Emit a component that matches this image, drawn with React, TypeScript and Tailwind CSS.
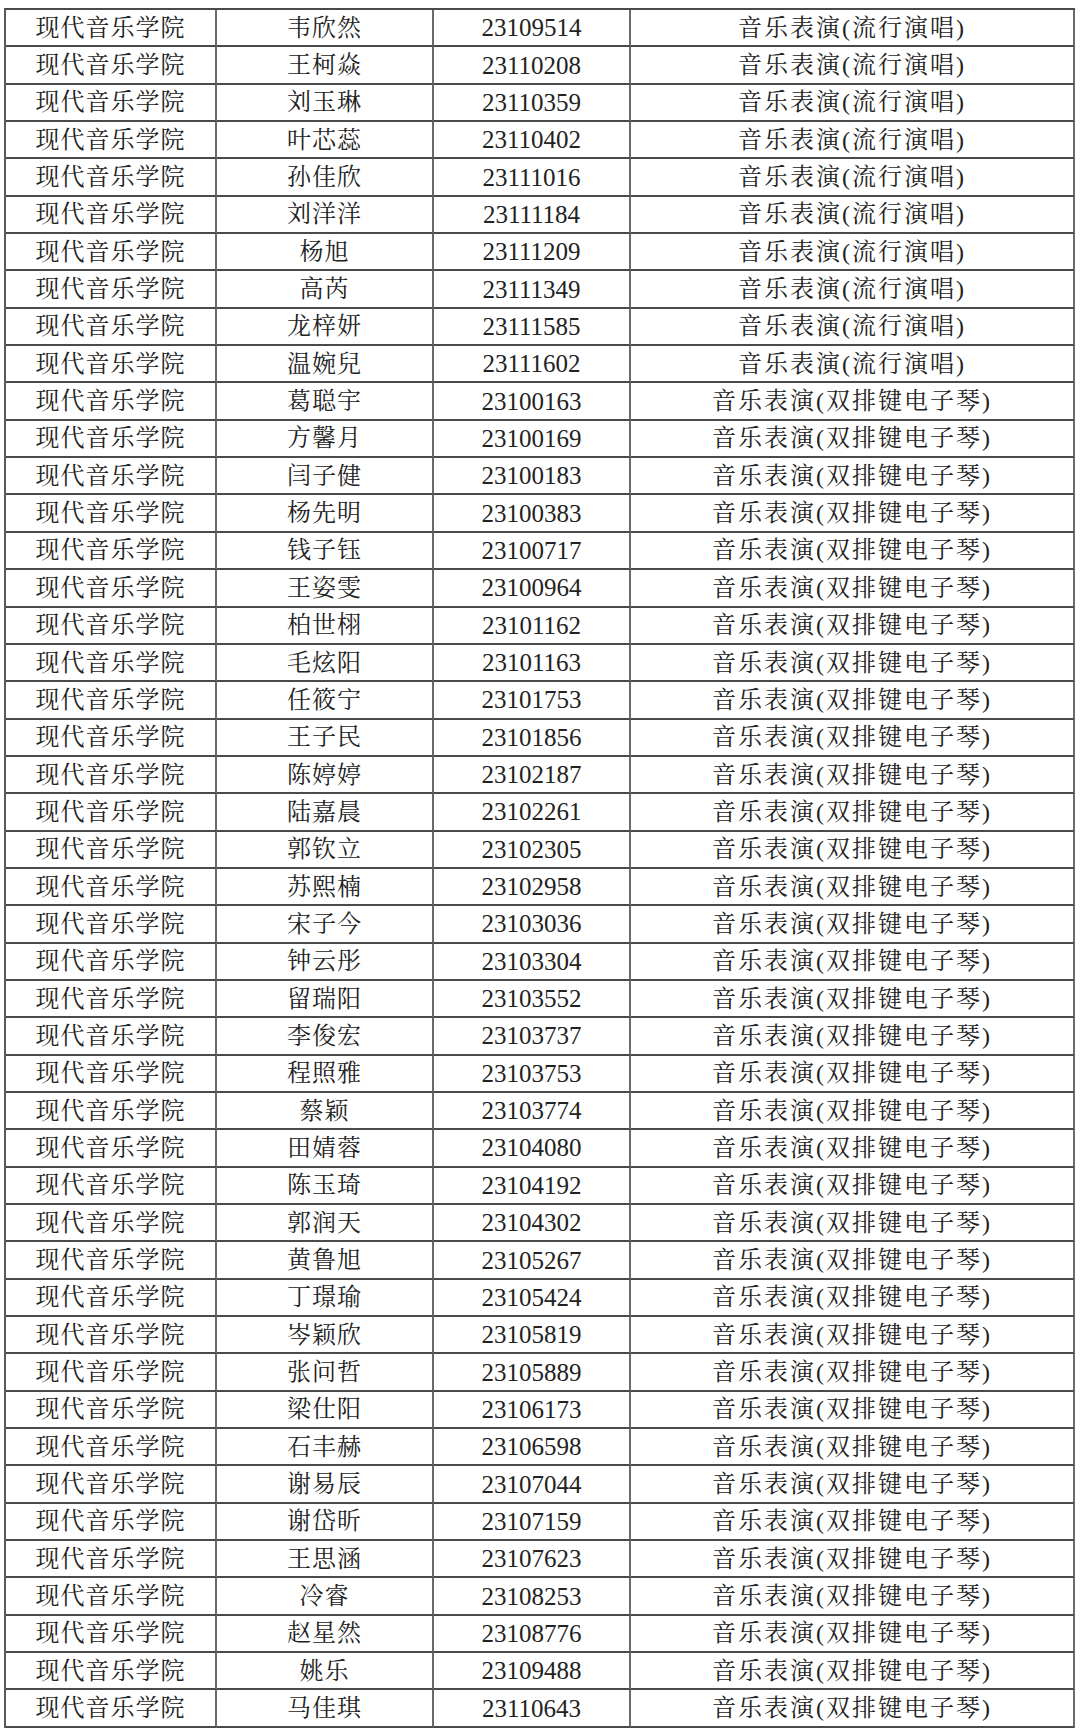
const POP = "音乐表演(流行演唱)";
const KEY = "音乐表演(双排键电子琴)";

const rows: [string, string, string][] = [
  ["韦欣然", "23109514", POP],
  ["王柯焱", "23110208", POP],
  ["刘玉琳", "23110359", POP],
  ["叶芯蕊", "23110402", POP],
  ["孙佳欣", "23111016", POP],
  ["刘洋洋", "23111184", POP],
  ["杨旭", "23111209", POP],
  ["高芮", "23111349", POP],
  ["龙梓妍", "23111585", POP],
  ["温婉兒", "23111602", POP],
  ["葛聪宇", "23100163", KEY],
  ["方馨月", "23100169", KEY],
  ["闫子健", "23100183", KEY],
  ["杨先明", "23100383", KEY],
  ["钱子钰", "23100717", KEY],
  ["王姿雯", "23100964", KEY],
  ["柏世栩", "23101162", KEY],
  ["毛炫阳", "23101163", KEY],
  ["任筱宁", "23101753", KEY],
  ["王子民", "23101856", KEY],
  ["陈婷婷", "23102187", KEY],
  ["陆嘉晨", "23102261", KEY],
  ["郭钦立", "23102305", KEY],
  ["苏熙楠", "23102958", KEY],
  ["宋子今", "23103036", KEY],
  ["钟云彤", "23103304", KEY],
  ["留瑞阳", "23103552", KEY],
  ["李俊宏", "23103737", KEY],
  ["程照雅", "23103753", KEY],
  ["蔡颖", "23103774", KEY],
  ["田婧蓉", "23104080", KEY],
  ["陈玉琦", "23104192", KEY],
  ["郭润天", "23104302", KEY],
  ["黄鲁旭", "23105267", KEY],
  ["丁璟瑜", "23105424", KEY],
  ["岑颖欣", "23105819", KEY],
  ["张问哲", "23105889", KEY],
  ["梁仕阳", "23106173", KEY],
  ["石丰赫", "23106598", KEY],
  ["谢易辰", "23107044", KEY],
  ["谢岱昕", "23107159", KEY],
  ["王思涵", "23107623", KEY],
  ["冷睿", "23108253", KEY],
  ["赵星然", "23108776", KEY],
  ["姚乐", "23109488", KEY],
  ["马佳琪", "23110643", KEY],
];

const cell =
  "flex items-center justify-center border-r-2 border-b-2 border-r-[#6a6a6a] border-b-[#4a4a4a] whitespace-nowrap";

export default function App() {
  return (
    <div className="min-h-screen bg-white pl-[4px] pt-[8px] text-[24px] leading-none text-[#222] font-[family-name:'Liberation_Serif','Noto_Serif_CJK_SC','Noto_Sans_CJK_SC',serif]">
      <div className="grid w-[1071px] grid-cols-[211px_217px_197px_444px] auto-rows-[37.35px] border-l-2 border-t-2 border-l-[#5a5a5a] border-t-[#4a4a4a]">
        {rows.map(([name, id, major]) => (
          <div key={id} className="contents">
            <div className={`${cell} tracking-[1px]`}>现代音乐学院</div>
            <div className={`${cell} tracking-[1px]`}>{name}</div>
            <div className={`${cell} text-[25px]`}>{id}</div>
            <div className={`${cell} tracking-[2px]`}>{major}</div>
          </div>
        ))}
      </div>
    </div>
  );
}
